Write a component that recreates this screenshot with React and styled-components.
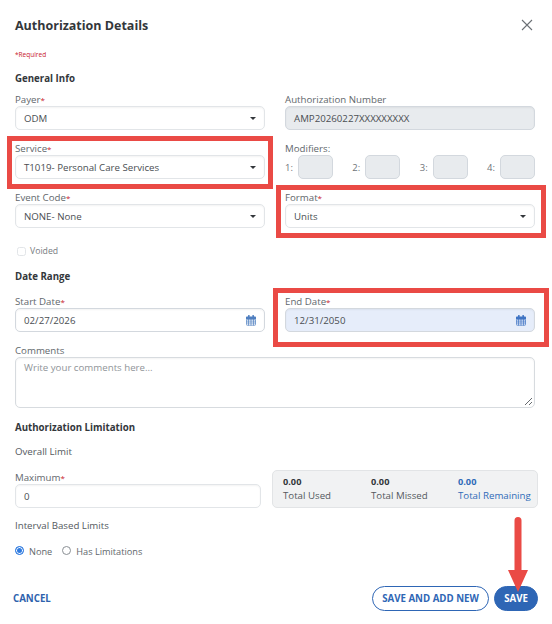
import React from 'react'
import styled, { createGlobalStyle } from 'styled-components'

const Global = createGlobalStyle`
  html, body { margin: 0; padding: 0; background: #fff; }
  body { font-family: "Open Sans", "Liberation Sans", sans-serif; color: #3f4347; }
  * { box-sizing: border-box; }
`

const Dialog = styled.div`
  position: relative;
  width: 552px;
  height: 624px;
  padding: 17px 17px 0 15px;
  overflow: hidden;
  background: #fff;
`

const Header = styled.header`
  display: flex;
  justify-content: space-between;
  align-items: center;
  height: 17px;
`

const Title = styled.h1`
  margin: 0;
  font-size: 12.5px;
  line-height: 17px;
  font-weight: 700;
  color: #33373b;
`

const Close = styled.button`
  display: flex;
  width: 14px;
  height: 14px;
  margin: -2px 1px 0 0;
  padding: 0;
  border: 0;
  background: none;
  color: #6b7075;
`

const RequiredNote = styled.div`
  margin-top: 16px;
  font-size: 6.5px;
  line-height: 10px;
  color: #c8202c;
`

const SectionTitle = styled.h2`
  height: 14px;
  margin: ${p => p.$top}px 0 0;
  font-size: 9.7px;
  line-height: 16px;
  font-weight: 700;
  color: #33373b;
`

const Grid = styled.div`
  display: grid;
  grid-template-columns: 250px 250px;
  column-gap: 20px;
  row-gap: 11px;
  margin-top: ${p => p.$top}px;
`

const Field = styled.div`
  min-width: 0;
  margin-top: ${p => p.$top || 0}px;
  width: ${p => (p.$width ? `${p.$width}px` : 'auto')};
`

const Label = styled.label`
  display: block;
  height: 14px;
  font-size: 9.7px;
  line-height: 15px;
  color: #62676c;
`

const Star = styled.span`
  font-size: 8px;
  color: #c8202c;
`

const Control = styled.div`
  display: flex;
  align-items: center;
  justify-content: space-between;
  height: 24px;
  padding: 0 8px;
  border: 1px solid ${p => (p.$muted ? '#d3d8de' : '#e2e5e8')};
  border-radius: 5px;
  background: ${p => p.$bg || '#fff'};
  box-shadow: inset 0 1px 2px rgba(0, 0, 0, 0.05);
  font-size: 9.7px;
  color: #4a4e52;
`

const Caret = styled.span`
  width: 0;
  height: 0;
  border-left: 3px solid transparent;
  border-right: 3px solid transparent;
  border-top: 3.5px solid #33373b;
`

const Modifiers = styled.div`
  display: flex;
  justify-content: space-between;
`

const Modifier = styled.div`
  display: flex;
  align-items: center;
  gap: 5px;
  font-size: 9.5px;
  color: #6f7479;
`

const ModifierInput = styled.div`
  width: 35px;
  height: 24px;
  border: 1px solid #d3d8de;
  border-radius: 5px;
  background: #e8ebee;
`

const CheckRow = styled.div`
  display: flex;
  align-items: center;
  gap: 4px;
  height: 14px;
  margin: 16px 0 0 2px;
  font-size: 8.7px;
  color: #777c81;
`

const Checkbox = styled.span`
  width: 9px;
  height: 9px;
  border: 1px solid #e2e5e8;
  border-radius: 2.5px;
`

const Comments = styled.div`
  position: relative;
  width: 520px;
  height: 51px;
  padding: 3px 8px;
  border: 1px solid #d7dbdf;
  border-radius: 5px;
  box-shadow: inset 0 1px 2px rgba(0, 0, 0, 0.05);
  font-size: 9.7px;
  line-height: 14px;
  color: #8f9499;
`

const Grip = styled.svg`
  position: absolute;
  right: 1px;
  bottom: 1px;
  width: 9px;
  height: 9px;
`

const SubTitle = styled.div`
  margin-top: 11px;
  font-size: 9.7px;
  line-height: 14px;
  color: #54595e;
`

const LimitRow = styled.div`
  display: flex;
  justify-content: space-between;
  align-items: flex-end;
  width: 523px;
  margin-top: 11px;
`

const Stats = styled.div`
  display: grid;
  grid-template-columns: 88px 87px 1fr;
  align-items: center;
  width: 266px;
  height: 38px;
  padding-left: 10px;
  border: 1px solid #e2e4e6;
  border-radius: 5px;
  background: #f1f2f3;
`

const Stat = styled.div`
  font-size: 9.7px;
  line-height: 14px;
  color: ${p => (p.$accent ? '#2f6bb8' : '#54595e')};

  strong {
    display: block;
    font-size: 9.2px;
    font-weight: 700;
    color: ${p => (p.$accent ? '#2f6bb8' : '#33373b')};
  }
`

const RadioRow = styled.div`
  display: flex;
  align-items: center;
  height: 14px;
  margin-top: 11px;
  font-size: 9.2px;
  color: #62676c;
`

const Radio = styled.span`
  width: 9px;
  height: 9px;
  margin: -1px 5px 0 0;
  border-radius: 50%;
  border: 1px solid ${p => (p.$on ? '#2f7be0' : '#8a8f94')};
  background: ${p => (p.$on ? '#2f7be0' : '#fff')};
  box-shadow: ${p => (p.$on ? 'inset 0 0 0 1px #fff' : 'none')};
`

const RadioLabel = styled.span`
  margin-right: 10px;
`

const Footer = styled.footer`
  display: flex;
  justify-content: space-between;
  align-items: center;
  width: 523px;
  margin-top: 28px;
`

const Cancel = styled.button`
  margin-left: -2px;
  padding: 0;
  border: 0;
  background: none;
  font: 700 9.7px "Open Sans", sans-serif;
  color: #2e62ad;
`

const Actions = styled.div`
  display: flex;
  gap: 5px;
`

const ActionButton = styled.button`
  width: ${p => p.$width}px;
  height: 25px;
  padding: 0;
  border: 1px solid #2e66b5;
  border-radius: 13px;
  background: ${p => (p.$primary ? '#2e66b5' : '#fff')};
  font: 700 9.7px "Open Sans", sans-serif;
  color: ${p => (p.$primary ? '#fff' : '#2e66b5')};
`

// red markup drawn on top of the screenshot
const Highlight = styled.div`
  position: absolute;
  left: ${p => p.$left}px;
  top: ${p => p.$top}px;
  width: ${p => p.$w}px;
  height: ${p => p.$h}px;
  border: 5px solid #ea4a45;
  pointer-events: none;
`

const Arrow = styled.svg`
  position: absolute;
  left: 508px;
  top: 517px;
  width: 20px;
  height: 76px;
`

const CalendarIcon = ({ color = '#4f7fc0' }) => (
  <svg width="10" height="11" viewBox="0 0 10 11">
    <rect x="2" y="0" width="1.6" height="2.5" rx=".5" fill={color} />
    <rect x="6.4" y="0" width="1.6" height="2.5" rx=".5" fill={color} />
    <path d="M0 2.2a.8.8 0 0 1 .8-.8h8.4a.8.8 0 0 1 .8.8V4H0z" fill={color} />
    <path
      d="M.4 4.4h9.2v5.2a.6.6 0 0 1-.6.6H1a.6.6 0 0 1-.6-.6zM0 6.1h10M0 8h10M2.5 4v6.5M5 4v6.5M7.5 4v6.5"
      fill="none"
      stroke={color}
      strokeWidth=".7"
    />
  </svg>
)

const Select = ({ label, value }) => (
  <Field>
    <Label>{label}<Star>*</Star></Label>
    <Control>{value}<Caret /></Control>
  </Field>
)

const stats = [
  { value: '0.00', name: 'Total Used' },
  { value: '0.00', name: 'Total Missed' },
  { value: '0.00', name: 'Total Remaining', accent: true },
]

export default function App() {
  return (
    <>
      <Global />
      <Dialog>
        <Header>
          <Title>Authorization Details</Title>
          <Close aria-label="Close">
            <svg width="14" height="14" viewBox="0 0 14 14">
              <path d="M2 2l10 10M12 2L2 12" stroke="currentColor" strokeWidth="1.1" fill="none" />
            </svg>
          </Close>
        </Header>
        <RequiredNote>*Required</RequiredNote>
        <SectionTitle $top={11}>General Info</SectionTitle>
        <Grid $top={7}>
          <Select label="Payer" value="ODM" />
          <Field>
            <Label>Authorization Number</Label>
            <Control $muted $bg="#e8ebee">AMP20260227XXXXXXXXX</Control>
          </Field>
          <Select label="Service" value="T1019- Personal Care Services" />
          <Field>
            <Label>Modifiers:</Label>
            <Modifiers>
              {[1, 2, 3, 4].map(n => (
                <Modifier key={n}>{n}:<ModifierInput /></Modifier>
              ))}
            </Modifiers>
          </Field>
          <Select label="Event Code" value="NONE- None" />
          <Select label="Format" value="Units" />
        </Grid>
        <CheckRow><Checkbox />Voided</CheckRow>
        <SectionTitle $top={11}>Date Range</SectionTitle>
        <Grid $top={11}>
          <Field>
            <Label>Start Date<Star>*</Star></Label>
            <Control $muted>02/27/2026<CalendarIcon /></Control>
          </Field>
          <Field>
            <Label>End Date<Star>*</Star></Label>
            <Control $muted $bg="#e6edfa">12/31/2050<CalendarIcon color="#3f74c4" /></Control>
          </Field>
        </Grid>
        <Field $top={11}>
          <Label>Comments</Label>
          <Comments>
            Write your comments here...
            <Grip viewBox="0 0 9 9">
              <path d="M1 8l7-7M5 8l3-3" stroke="#55595d" strokeWidth=".9" fill="none" />
            </Grip>
          </Comments>
        </Field>
        <SectionTitle $top={12}>Authorization Limitation</SectionTitle>
        <SubTitle>Overall Limit</SubTitle>
        <LimitRow>
          <Field $width={246}>
            <Label>Maximum<Star>*</Star></Label>
            <Control>0</Control>
          </Field>
          <Stats>
            {stats.map(s => (
              <Stat key={s.name} $accent={s.accent}>
                <strong>{s.value}</strong>
                {s.name}
              </Stat>
            ))}
          </Stats>
        </LimitRow>
        <SubTitle>Interval Based Limits</SubTitle>
        <RadioRow>
          <Radio $on />
          <RadioLabel>None</RadioLabel>
          <Radio />
          <RadioLabel>Has Limitations</RadioLabel>
        </RadioRow>
        <Footer>
          <Cancel>CANCEL</Cancel>
          <Actions>
            <ActionButton $width={117}>SAVE AND ADD NEW</ActionButton>
            <ActionButton $primary $width={44}>SAVE</ActionButton>
          </Actions>
        </Footer>
        <Highlight $left={7} $top={136} $w={266} $h={53} />
        <Highlight $left={276} $top={185} $w={270} $h={53} />
        <Highlight $left={273} $top={288} $w={276} $h={59} />
        <Arrow viewBox="0 0 20 76">
          <path
            d="M6.5 3.5a3.5 3.5 0 0 1 7 0V53H20L10 75 0 53h6.5z"
            fill="#ea4a45"
          />
        </Arrow>
      </Dialog>
    </>
  )
}
